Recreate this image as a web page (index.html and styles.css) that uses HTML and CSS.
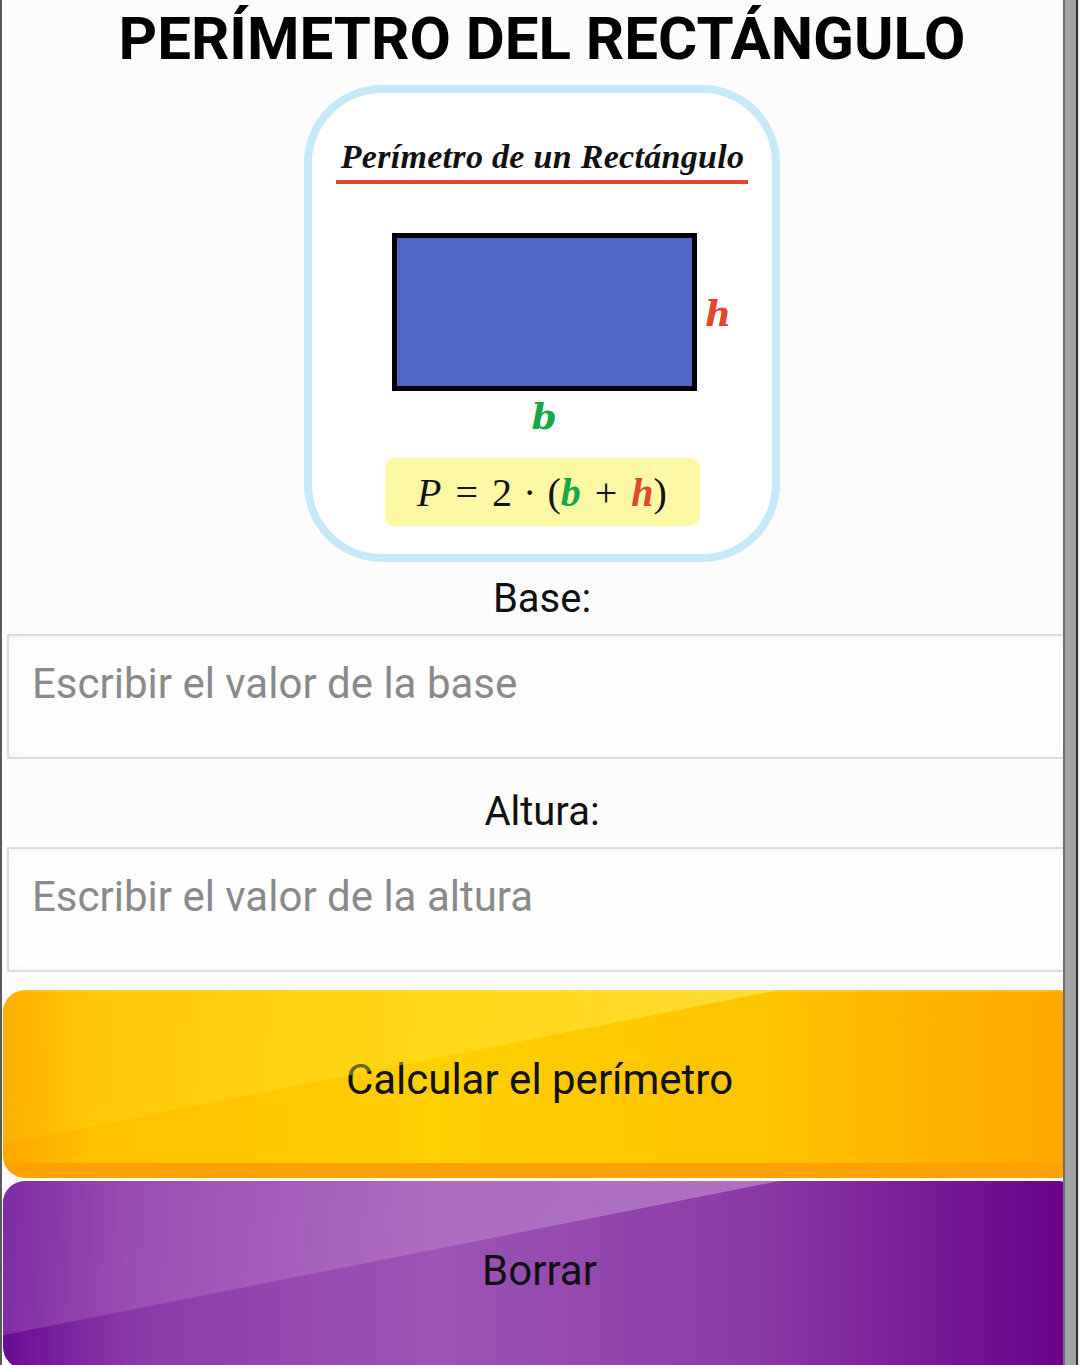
FILE: index.html
```html
<!DOCTYPE html>
<html lang="es">
<head>
<meta charset="utf-8">
<title>Perímetro del rectángulo</title>
<link rel="stylesheet" href="styles.css">
</head>
<body>
<div class="frame">
  <main class="page">
    <h1 class="title">PERÍMETRO DEL RECTÁNGULO</h1>

    <section class="card">
      <h2 class="card-title"><span>Perímetro de un Rectángulo</span></h2>
      <div class="figure">
        <div class="rect"></div>
        <span class="lbl lbl-h">h</span>
      </div>
      <div class="lbl lbl-b">b</div>
      <div class="formula">
        <span class="m-i">P</span><span class="m-op">=</span><span>2</span><span class="m-dot">·</span><span>(</span><span class="m-b">b</span><span class="m-op">+</span><span class="m-h">h</span><span>)</span>
      </div>
    </section>

    <label class="field-label" for="base">Base:</label>
    <input class="field" id="base" type="text" placeholder="Escribir el valor de la base">

    <label class="field-label second" for="altura">Altura:</label>
    <input class="field" id="altura" type="text" placeholder="Escribir el valor de la altura">

    <button class="btn btn-calc" type="button">Calcular el perímetro</button>
    <button class="btn btn-clear" type="button">Borrar</button>
  </main>
  <div class="scrollbar"></div>
</div>
</body>
</html>
```

FILE: styles.css
```css
* { box-sizing: border-box; }

html, body {
  margin: 0;
  padding: 0;
  background: #fcfcfc;
}

body {
  font-family: Roboto, "Liberation Sans", sans-serif;
  color: #111;
  overflow: hidden;
}

.frame {
  position: relative;
  width: 1080px;
  height: 1365px;
  overflow: hidden;
  border-left: 2px solid #5a5a5a;
}

.page {
  display: flex;
  flex-direction: column;
  align-items: center;
  width: 1080px;
}

.title {
  margin: 3px 0 0;
  font-size: 60px;
  line-height: 72px;
  font-weight: 700;
  color: #000;
  text-align: center;
}

.card {
  margin-top: 10px;
  width: 476px;
  height: 477px;
  border: 8px solid #c6eaf8;
  border-radius: 78px;
  background: #fff;
  display: flex;
  flex-direction: column;
  align-items: center;
}

.card-title {
  margin: 44px 0 0;
  font-family: "Liberation Serif", "DejaVu Serif", serif;
  font-style: italic;
  font-weight: 700;
  font-size: 34px;
  line-height: 40px;
  color: #111;
}

.card-title span {
  display: inline-block;
  padding: 0 4px 3px 5px;
  border-bottom: 4px solid #e2472c;
  letter-spacing: 0.3px;
}

.figure {
  position: relative;
  margin-top: 49px;
  margin-left: 5px;
}

.rect {
  width: 305px;
  height: 158px;
  background: #4f67c8;
  border: 5px solid #000;
}

.lbl {
  font-family: "DejaVu Serif", "Liberation Serif", serif;
  font-style: italic;
  font-weight: 700;
  font-size: 36px;
  line-height: 40px;
}

.lbl-h {
  position: absolute;
  left: 313px;
  top: 60px;
  color: #e2472c;
}

.lbl-b {
  margin-top: 5px;
  margin-left: 4px;
  color: #17a84a;
}

.formula {
  margin-top: 22px;
  width: 315px;
  height: 68px;
  border-radius: 10px;
  background: #fdf8a4;
  display: flex;
  align-items: center;
  justify-content: center;
  font-family: "Liberation Serif", "DejaVu Serif", serif;
  font-size: 40px;
  color: #111;
}

.m-i { font-style: italic; }
.m-op { margin: 0 14px; }
.m-dot { margin: 0 11px; }
.m-b { font-style: italic; font-weight: 700; color: #17a84a; }
.m-h { font-style: italic; font-weight: 700; color: #e2472c; }

.field-label {
  margin-top: 13px;
  font-size: 40px;
  line-height: 48px;
  color: #111;
}

.field-label.second {
  margin-top: 29px;
}

.field {
  display: block;
  align-self: stretch;
  margin: 11px 5px 0 5px;
  height: 125px;
  padding: 23px 24px 50px 23px;
  border: 2px solid #dcdcdc;
  background: #fefefe;
  box-shadow: inset 0 0 10px rgba(0, 0, 0, 0.05);
  font-family: Roboto, "Liberation Sans", sans-serif;
  font-size: 42px;
  line-height: 48px;
  color: #222;
  outline: none;
}

.field::placeholder {
  color: #8a8a8a;
}

.btn {
  position: relative;
  align-self: stretch;
  margin: 0 1px;
  height: 188px;
  padding: 0 5px 9px 0;
  border: none;
  border-radius: 22px;
  font-family: Roboto, "Liberation Sans", sans-serif;
  font-size: 42px;
  color: #111;
  overflow: hidden;
  cursor: pointer;
}

.btn::before {
  content: "";
  position: absolute;
  inset: 0;
  clip-path: polygon(0 0, 72% 0, 0 82%);
  pointer-events: none;
}

.btn-calc {
  margin-top: 18px;
  background:
    linear-gradient(to bottom, rgba(255,255,255,0.25) 0, rgba(255,255,255,0) 3px),
    linear-gradient(to top, #ffa100 0, #ffa100 15px, rgba(255,161,0,0) 15px),
    linear-gradient(to right, #ffa700 0%, #ffc000 8%, #ffcf00 40%, #ffc400 70%, #ffa600 100%);
}

.btn-calc::before {
  background: linear-gradient(100deg, rgba(255,210,0,0.2) 0%, rgba(255,230,60,0.5) 50%, rgba(255,240,140,0.7) 100%);
}

.btn-clear {
  margin-top: 3px;
  background:
    linear-gradient(to right, #690c94 0%, #8a3aa8 12%, #9b55b4 40%, #8a3aa6 70%, #650088 100%);
}

.btn-clear::before {
  background: linear-gradient(100deg, rgba(160,90,185,0.4) 0%, rgba(200,150,210,0.55) 60%, rgba(210,170,220,0.6) 100%);
}

.scrollbar {
  position: absolute;
  top: 0;
  right: 0;
  width: 17px;
  height: 1365px;
  background: #a2a2a2;
  border-left: 2px solid #6e6e6e;
  border-right: 2px solid #f2f2f2;
  box-shadow: inset -2px 0 0 #2e2e2e;
}
```
